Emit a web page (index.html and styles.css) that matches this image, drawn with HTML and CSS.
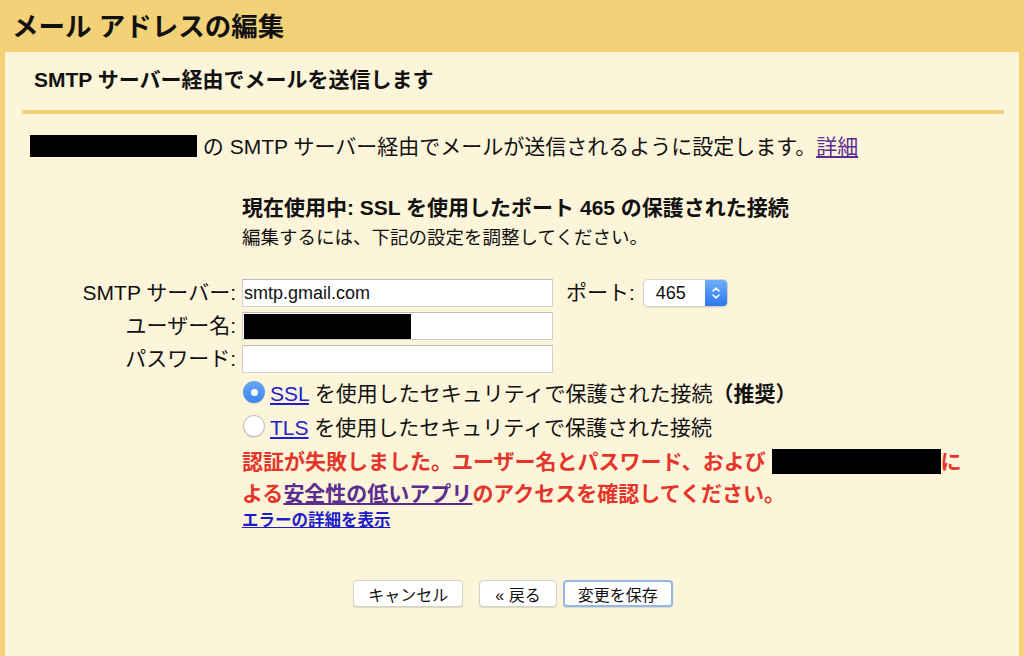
FILE: index.html
```html
<!DOCTYPE html>
<html lang="ja">
<head>
    <meta charset="utf-8">
    <link rel="stylesheet" href="styles.css">
</head>
<body>
<div class="title">メール アドレスの編集</div>
<div class="panel">
    <div class="subtitle">SMTP サーバー経由でメールを送信します</div>
    <div class="rule"></div>

    <div class="intro"><span class="redact redact-intro"></span> の SMTP サーバー経由でメールが送信されるように設定します。<a class="visited" href="#">詳細</a></div>

    <div class="current">
        <div class="current-head">現在使用中: SSL を使用したポート 465 の保護された接続</div>
        <div class="current-note">編集するには、下記の設定を調整してください。</div>
    </div>

    <div class="form">
        <label class="label">SMTP サーバー:</label>
        <div class="field">
            <div class="input">smtp.gmail.com</div>
            <span class="port-label">ポート:</span>
            <div class="select">
                <span class="select-value">465</span>
                <span class="select-arrow">
                    <svg width="10" height="16" viewBox="0 0 10 16">
                        <path d="M2 6 L5 3 L8 6 M2 10 L5 13 L8 10" fill="none" stroke="#fff" stroke-width="1.6" stroke-linecap="round" stroke-linejoin="round"/>
                    </svg>
                </span>
            </div>
        </div>

        <label class="label">ユーザー名:</label>
        <div class="field">
            <div class="input"><span class="redact redact-user"></span></div>
        </div>

        <label class="label">パスワード:</label>
        <div class="field">
            <div class="input"></div>
        </div>
    </div>

    <div class="options">
        <div class="radio-row">
            <span class="radio checked"></span>
            <span><a class="link" href="#">SSL</a> を使用したセキュリティで保護された接続<b>（推奨）</b></span>
        </div>
        <div class="radio-row">
            <span class="radio"></span>
            <span><a class="link" href="#">TLS</a> を使用したセキュリティで保護された接続</span>
        </div>
        <div class="error">認証が失敗しました。ユーザー名とパスワード、および <span class="redact redact-error"></span>に<br>よる<a class="visited" href="#">安全性の低いアプリ</a>のアクセスを確認してください。</div>
        <a class="details" href="#">エラーの詳細を表示</a>
    </div>

    <div class="buttons">
        <button class="btn">キャンセル</button>
        <button class="btn btn-back">« 戻る</button>
        <button class="btn btn-save">変更を保存</button>
    </div>
</div>
</body>
</html>
```

FILE: styles.css
```css
* {
    box-sizing: border-box;
}

body {
    margin: 0;
    height: 656px;
    overflow: hidden;
    background-color: #f2d177;
    color: #111111;
    font-family: "Liberation Sans", "Noto Sans CJK JP", sans-serif;
    font-size: 21px;
}

a {
    text-decoration: underline;
}

.title {
    height: 52px;
    padding-left: 12px;
    font-size: 26.5px;
    font-weight: bold;
    line-height: 54px;
}

.panel {
    margin: 0 5px;
    height: 604px;
    padding: 0 15px 0 17px;
    background-color: #fdf5da;
}

.subtitle {
    height: 58px;
    padding-left: 12px;
    font-size: 21px;
    font-weight: bold;
    line-height: 56px;
}

.rule {
    height: 4px;
    background-color: #f2d177;
}

.intro {
    margin-top: 19px;
    padding-left: 8px;
    line-height: 28px;
}

.redact {
    display: inline-block;
    background-color: #000000;
    vertical-align: middle;
}

.redact-intro {
    width: 167px;
    height: 22px;
    margin-top: -4px;
}

.redact-user {
    width: 167px;
    height: 25px;
}

.redact-error {
    width: 169px;
    height: 25px;
    margin-top: -4px;
}

.visited {
    color: #5b2d90;
}

.link {
    color: #2020d0;
}

.current {
    margin: 32px 0 0 220px;
}

.current-head {
    font-weight: bold;
    line-height: 30px;
}

.current-note {
    font-size: 18.5px;
    line-height: 30px;
}

.form {
    display: grid;
    grid-template-columns: 214px auto;
    column-gap: 6px;
    row-gap: 5px;
    margin-top: 26px;
}

.label {
    text-align: right;
    line-height: 28px;
}

.field {
    display: flex;
    align-items: center;
}

.input {
    width: 311px;
    height: 28px;
    padding: 0 1px;
    background-color: #ffffff;
    border: 1px solid #cfcfcf;
    border-top-color: #bdbdbd;
    font-size: 18px;
    line-height: 26px;
    display: flex;
    align-items: center;
}

.port-label {
    margin: 0 8px 0 13px;
    line-height: 28px;
}

.select {
    display: flex;
    align-items: stretch;
    width: 85px;
    height: 28px;
    background-color: #ffffff;
    border: 1px solid #d2d2d2;
    border-radius: 5px;
    box-shadow: 0 1px 1px rgba(0, 0, 0, 0.08);
    overflow: hidden;
}

.select-value {
    flex: 1;
    padding-left: 12px;
    font-size: 18px;
    line-height: 26px;
}

.select-arrow {
    width: 22px;
    display: flex;
    align-items: center;
    justify-content: center;
    background: linear-gradient(#6fb0fa, #2c76ef);
}

.options {
    margin: 2px 0 0 220px;
}

.radio-row {
    display: flex;
    align-items: center;
    height: 34px;
}

.radio {
    width: 22px;
    height: 22px;
    margin: 0 5px 0 1px;
    border-radius: 50%;
    background-color: #ffffff;
    border: 1px solid #bcbcbc;
    box-shadow: 0 1px 1px rgba(0, 0, 0, 0.1);
    display: flex;
    align-items: center;
    justify-content: center;
}

.radio.checked {
    border: none;
    background: linear-gradient(#68a7f5, #3c86ee);
}

.radio.checked::after {
    content: "";
    width: 7px;
    height: 7px;
    border-radius: 50%;
    background-color: #ffffff;
}

.error {
    margin-top: 3px;
    color: #e5352b;
    font-weight: bold;
    line-height: 32px;
}

.error .visited {
    color: #5b2d90;
}

.details {
    display: block;
    color: #1c1cc8;
    font-size: 16.5px;
    font-weight: bold;
    line-height: 20px;
}

.buttons {
    margin-top: 50px;
    text-align: center;
    font-size: 0;
}

.btn {
    height: 27px;
    padding: 0 14px;
    margin: 0 4px;
    background-color: #ffffff;
    border: 1px solid #d4d1c6;
    border-radius: 4px;
    box-shadow: 0 1px 1px rgba(0, 0, 0, 0.12);
    font-family: "Liberation Sans", "Noto Sans CJK JP", sans-serif;
    font-size: 16px;
    color: #111111;
    vertical-align: top;
}

.btn-back {
    margin-left: 12px;
    padding: 0 15px;
}

.btn-save {
    margin-left: 2px;
    border: 2px solid #93b9e9;
    padding: 0 13px;
}
```
